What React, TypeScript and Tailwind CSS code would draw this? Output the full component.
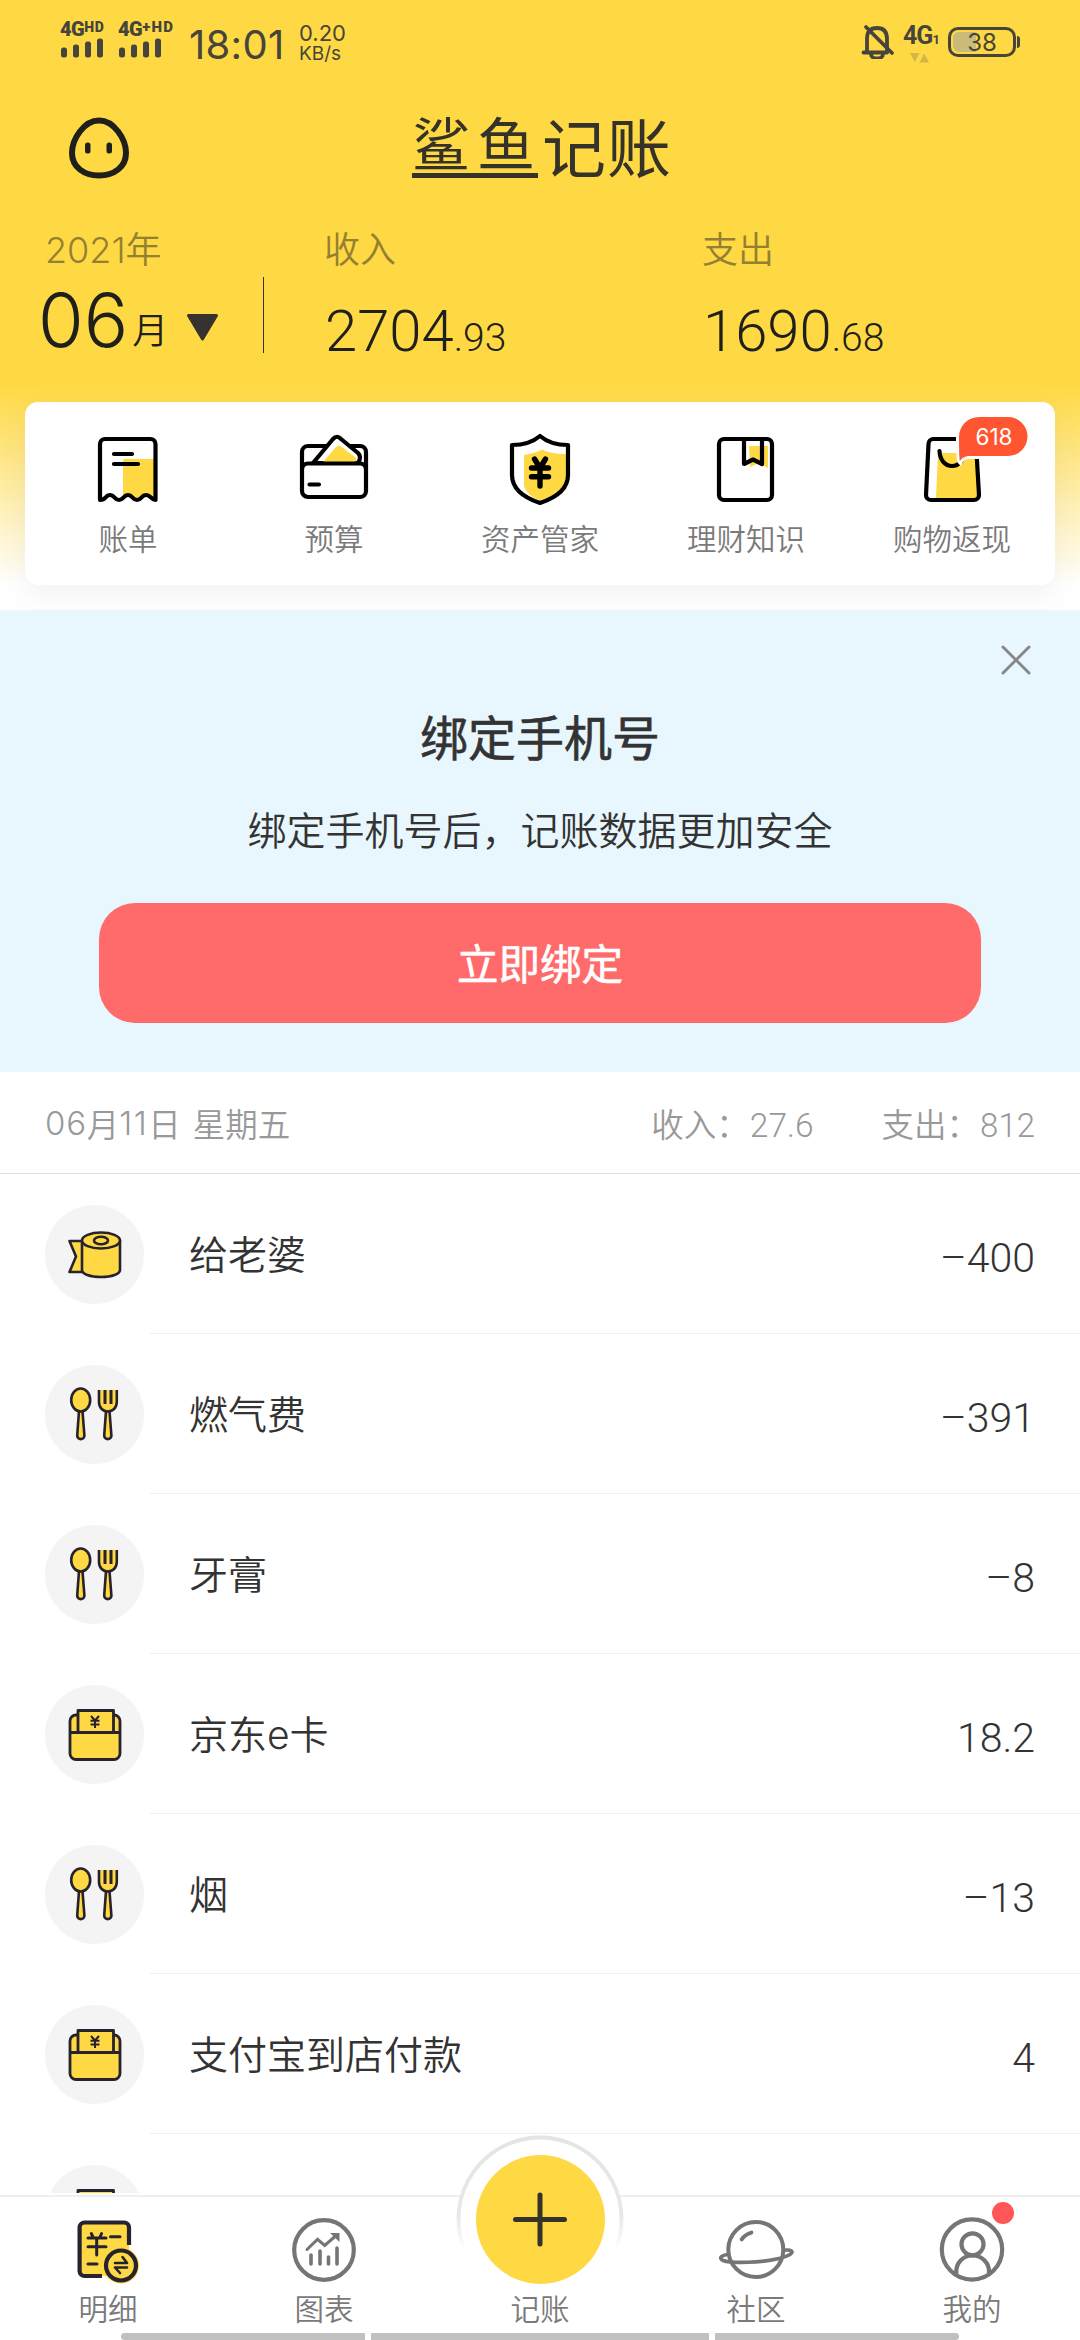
import type { ReactNode } from "react";

const YELLOW = "#FFD943";
const INK = "#26222E";

/* ---------- status bar ---------- */

function Signal({ children }: { children: ReactNode }) {
  return (
    <div className="flex flex-col">
      <div className="flex h-[18px] items-start whitespace-nowrap font-['Roboto'] text-[20px] font-black leading-[18px] tracking-[-0.5px]">
        {children}
      </div>
      <svg width="44" height="20" viewBox="0 0 44 20" fill="#47453B">
        <rect x="1" y="9.5" width="6" height="10" rx="2.5" />
        <rect x="13" y="6.5" width="6" height="13" rx="2.5" />
        <rect x="25" y="3.5" width="6" height="16" rx="2.5" />
        <rect x="37" y="0.5" width="6" height="19" rx="2.5" />
      </svg>
    </div>
  );
}

function StatusBar() {
  return (
    <div className="flex h-[80px] items-start pl-[60px] pr-[60px] font-['Inter'] text-[#47453B]">
      <div className="mt-[20px] w-[58px]">
        <Signal>
          4G<span className="text-[14px] leading-[14px] tracking-[0.8px]">HD</span>
        </Signal>
      </div>
      <div className="mt-[20px] w-[71px]">
        <Signal>
          4G<span className="text-[15px] leading-[14px] tracking-[1.200px]">+HD</span>
        </Signal>
      </div>
      <div className="mt-[24px] w-[110px] text-[40px] leading-[42px] tracking-[0.3px]">18:01</div>
      <div className="mt-[23px] text-[21px] leading-[21px]">
        <div className="text-[22px]">0.20</div>
        <div className="text-[19px] leading-[20px]">KB/s</div>
      </div>
      <div className="ml-auto flex">
        <svg className="mt-[23px]" width="34" height="36" viewBox="0 0 34 36" fill="none" stroke="#47453B" strokeWidth="3.8" strokeLinecap="round">
          <path d="M6 28V16C6 8 10 5 16 5s10 3 10 11v12" />
          <path d="M2.500 29.500H26" />
          <path d="M5 4L31 30" />
          <path d="M10 31a6 4.500 0 0 0 12 0" />
        </svg>
        <div className="ml-[8px] mt-[24px] w-[45px] font-['Roboto'] font-bold">
          <div className="text-[25px] leading-[24px] tracking-[-1px]">
            4G<span className="text-[13px]">1</span>
          </div>
          <svg className="ml-[7px] mt-[1px]" width="20" height="10" viewBox="0 0 20 10" fill="#D3B548">
            <path d="M0 0H9.500L4.750 9zM9.500 9.500H19L14.250 .5z" />
          </svg>
        </div>
        <div className="mt-[27px] flex h-[30px] items-center">
          <div className="relative h-[30px] w-[68px] rounded-[10px] border-[3px] border-[#47453B]">
            <div className="absolute left-[1.500px] top-[2px] h-[20px] w-[23px] rounded-l-[6px] bg-[#CBBB78]" />
            <div className="relative text-center text-[24px] leading-[25px]">38</div>
          </div>
          <div className="ml-px h-[12px] w-[3px] rounded-r-full bg-[#47453B]" />
        </div>
      </div>
    </div>
  );
}

/* ---------- header ---------- */

function FaceIcon() {
  return (
    <svg width="62" height="62" viewBox="0 0 62 62" fill="none">
      <path d="M31 3.500C46 3.500 58 22 58 36 58 50 46 58.500 31 58.500S4 50 4 36C4 22 16 3.500 31 3.500z" stroke="#1F1F1B" strokeWidth="6" />
      <rect x="17" y="25.500" width="5.500" height="11" rx="2.500" fill="#1F1F1B" />
      <rect x="38.500" y="25.500" width="5.500" height="11" rx="2.500" fill="#1F1F1B" />
    </svg>
  );
}

function Amount({ label, whole, cents, className }: { label: string; whole: string; cents: string; className: string }) {
  return (
    <div className={className}>
      <div className="mt-[-2px] h-[36px] text-[36px] font-[350] leading-[36px] text-[#948031]">{label}</div>
      <div className="ml-px mt-[37px] whitespace-nowrap font-['Roboto'] text-[58px] font-light leading-[58px] text-[#1F1F1B]">
        {whole}
        <span className="text-[39px]">{cents}</span>
      </div>
    </div>
  );
}

function Header() {
  return (
    <header>
      <div className="flex h-[151px] items-start">
        <div className="ml-[68px] mt-[37px]">
          <FaceIcon />
        </div>
        <h1 className="ml-[282px] mt-[34px] flex text-[64px] font-normal leading-[60px] tracking-[1px] text-[#35322A]">
          <span className="h-[64px] w-[126px] whitespace-nowrap border-b-[5px] border-[#35322A] text-[58px] leading-[55px] tracking-[7px]">鲨鱼</span>
          <span className="ml-[4px] leading-[61px]">记账</span>
        </h1>
      </div>
      <div className="flex h-[171px] items-start">
        <div className="ml-[45px] w-[218px]">
          <div className="mt-[-2px] h-[36px] text-[36px] font-[350] leading-[36px] text-[#948031]">
            <span className="font-['Inter'] font-light">2021</span>年
          </div>
          <div className="ml-[-7px] mt-[17px] flex items-end text-[#1F1F1B]">
            <span className="font-['Inter'] text-[74px] font-light leading-[76px]">06</span>
            <span className="mb-[12px] ml-[4px] text-[36px] font-[350] leading-[36px]">月</span>
            <svg className="mb-[16px] ml-[18px]" width="33" height="29" viewBox="0 0 33 29">
              <path d="M2.500 2.500H30.500L16.500 26z" fill="#35322F" stroke="#35322F" strokeWidth="3" strokeLinejoin="round" />
            </svg>
          </div>
        </div>
        <div className="mt-[46px] h-[76px] w-[1px] bg-[#35322A]" />
        <Amount className="ml-[60px] w-[378px]" label="收入" whole="2704" cents=".93" />
        <Amount className="" label="支出" whole="1690" cents=".68" />
      </div>
    </header>
  );
}

/* ---------- shortcuts ---------- */

function ShortcutSvg({ children }: { children: ReactNode }) {
  return (
    <svg width="72" height="74" viewBox="0 0 72 74" fill="none" stroke="#000" strokeWidth="4.200" strokeLinecap="round" strokeLinejoin="round">
      {children}
    </svg>
  );
}

function BillIcon() {
  return (
    <ShortcutSvg>
      <path d="M31 29a2 2 0 0 1 2-2h30v37l-9-1-9 4-14-4z" fill={YELLOW} stroke="none" />
      <path d="M8 68V12a5 5 0 0 1 5-5h45.500a5 5 0 0 1 5 5v56q-2 0-4.500-2.500T54 63t-4.500 2.500T45 68t-4.500-2.500T36 63t-4.500 2.500T27 68t-4.500-2.500T18 63t-4.500 2.500T8 68z" />
      <path d="M22 22H40M22 32H46" />
    </ShortcutSvg>
  );
}

function BudgetIcon() {
  return (
    <ShortcutSvg>
      <rect x="4" y="14" width="64" height="51" rx="6" />
      <path d="M15 31L35 7q4-4.500 8 0L60 21q4 4 0 10z" fill="#fff" />
      <path d="M24 31L38 15q3-3 6 0l14 11q1 3-2 5z" fill={YELLOW} stroke="none" />
      <path d="M4 37a6 6 0 0 1 6-5.500h52a6 6 0 0 1 6 5.500M11.500 52.500H21" />
    </ShortcutSvg>
  );
}

function AssetIcon() {
  return (
    <ShortcutSvg>
      <path d="M20 23C27 22 34 20 38 17.500 45 21 54 22 62 22V44C61 58 49 66 37 69 29 66 20 60 20 52z" fill={YELLOW} stroke="none" />
      <path d="M36 4C29 10 19 13 8 13V43C8 57 21 66 36 71 51 66 64 57 64 43V13C53 13 43 10 36 4z" />
      <path d="M30.500 27L36 36L41.500 27M27.500 36H44.500M27.500 44.700H44.500M36 36V54" strokeWidth="5.400" />
    </ShortcutSvg>
  );
}

function BookIcon() {
  return (
    <ShortcutSvg>
      <path d="M39 14H58V36L49 31L40 35z" fill={YELLOW} stroke="none" />
      <rect x="9" y="7" width="53" height="61" rx="5" />
      <path d="M34 7V32L43 27.500L52 32V7" />
    </ShortcutSvg>
  );
}

function BagIcon() {
  return (
    <ShortcutSvg>
      <path d="M22 21H60L62 66H20z" fill={YELLOW} stroke="none" />
      <path d="M17 7H55a5 5 0 0 1 5 5l3 51a5 5 0 0 1-5 5H15a5 5 0 0 1-5-5l2.500-51a5 5 0 0 1 4.500-5z" />
      <path d="M23.500 19C24 28 29 34 36 34S48 28 48.500 19" />
    </ShortcutSvg>
  );
}

function Badge({ text }: { text: string }) {
  return (
    <div className="absolute left-[43px] top-[-15px]">
      <svg width="75" height="54" viewBox="-3 -3 75 54" className="absolute left-[-3px] top-[-3px]">
        <path d="M20 0H49a19.500 19.500 0 0 1 0 39H9Q3 40 1 44Q0 43 0 20A20 20 0 0 1 20 0z" fill="#FF5530" stroke="#fff" strokeWidth="6" paintOrder="stroke" />
      </svg>
      <div className="relative h-[39px] w-[69px] pl-[1px] text-center font-['Inter'] text-[22.500px] leading-[40px] text-white">{text}</div>
    </div>
  );
}

const shortcuts = [
  { label: "账单", icon: <BillIcon /> },
  { label: "预算", icon: <BudgetIcon /> },
  { label: "资产管家", icon: <AssetIcon /> },
  { label: "理财知识", icon: <BookIcon /> },
  { label: "购物返现", icon: <BagIcon />, badge: "618" },
];

function Shortcuts() {
  return (
    <div className="mx-[25px] grid h-[183px] grid-cols-5 rounded-[13px] bg-white shadow-[0_10px_28px_rgba(90,90,120,0.08)]">
      {shortcuts.map((s) => (
        <div key={s.label} className="flex flex-col items-center pt-[30px]">
          <div className="relative h-[74px]">
            {s.icon}
            {s.badge && <Badge text={s.badge} />}
          </div>
          <div className="mt-[15px] text-[29.500px] font-[350] leading-[32px] text-[#7A7A7A]">{s.label}</div>
        </div>
      ))}
    </div>
  );
}

/* ---------- bind banner ---------- */

function BindBanner() {
  return (
    <section className="relative flex h-[462px] flex-col items-center bg-[#E8F7FD] text-[#333]">
      <svg className="absolute right-[49px] top-[35px]" width="30" height="30" viewBox="0 0 30 30" stroke="#888" strokeWidth="3" strokeLinecap="round">
        <path d="M2 2L28 28M28 2L2 28" />
      </svg>
      <h2 className="mt-[101px] text-[48px] font-normal leading-[48px] [-webkit-text-stroke:0.6px_#333]">绑定手机号</h2>
      <p className="mt-[50px] text-[39px] font-[350] leading-[39px]">绑定手机号后，记账数据更加安全</p>
      <button className="mt-[55px] h-[120px] w-[882px] rounded-[36px] bg-[#FF6B6B] pb-[2px] text-[41.500px] font-normal text-white [-webkit-text-stroke:0.6px_#fff]">立即绑定</button>
    </section>
  );
}

/* ---------- records ---------- */

function RollIcon() {
  return (
    <g fill={YELLOW} stroke={INK} strokeWidth="2.600" strokeLinejoin="round">
      <path d="M38 36H24.500L31 51.500L24.500 67H38z" />
      <path d="M37 35.500V65C37 69 45 72 56 72S75 69 75 65V35.500z" />
      <ellipse cx="56" cy="35.500" rx="19" ry="8" />
      <ellipse cx="56" cy="35.500" rx="7" ry="3.800" />
    </g>
  );
}

function CutleryIcon() {
  return (
    <g fill={YELLOW} stroke={INK} strokeWidth="2.600" strokeLinejoin="round">
      <path d="M34 46L32.200 70.500a3.600 3.600 0 0 0 7.200 0L37.500 46z" />
      <ellipse cx="35.700" cy="35" rx="9.500" ry="11.500" />
      <path d="M61 46L59.200 70.500a3.600 3.600 0 0 0 7.200 0L64.500 46z" />
      <path d="M54 25V37C54 43 58 46.500 62.800 46.500S71.800 43 71.800 37V25" />
      <path d="M60 25V39M66 25V39" strokeWidth="3" />
    </g>
  );
}

function WalletIcon() {
  return (
    <g fill={YELLOW} stroke={INK} strokeWidth="2.800" strokeLinejoin="round">
      <rect x="25" y="30" width="50" height="44.500" rx="6" />
      <path d="M33 47.500V25.500H68.500V47.500" />
      <path d="M25 47.500H75" />
      <path d="M46 31L50 35.500L54 31M45.500 35.800H54.500M45.500 39.500H54.500M50 35.500V43" strokeWidth="2" fill="none" />
    </g>
  );
}

const records = [
  { name: "给老婆", amount: "–400", icon: <RollIcon /> },
  { name: "燃气费", amount: "–391", icon: <CutleryIcon /> },
  { name: "牙膏", amount: "–8", icon: <CutleryIcon /> },
  { name: "京东e卡", amount: "18.2", icon: <WalletIcon /> },
  { name: "烟", amount: "–13", icon: <CutleryIcon /> },
  { name: "支付宝到店付款", amount: "4", icon: <WalletIcon /> },
  { name: "", amount: "", icon: <WalletIcon /> },
];

function Records() {
  return (
    <section className="min-h-0 flex-1 overflow-hidden bg-white">
      <div className="flex h-[102px] items-center border-b border-[#DCDCDC] px-[45px] pt-[6px] text-[32.500px] font-[350] text-[#999]">
        <div className="flex whitespace-nowrap pb-[4px]">
          <span className="font-['Inter'] text-[33px] font-light tracking-[0.8px]">06</span>月
          <span className="font-['Inter'] text-[33px] font-light tracking-[1.500px]">11</span>日
          <span className="ml-[12px]">星期五</span>
        </div>
        <div className="ml-auto flex gap-[68px] whitespace-nowrap">
          <div>
            收入：<span className="ml-[1px] font-['Roboto'] text-[33.500px] font-light">27.6</span>
          </div>
          <div>
            支出：<span className="ml-[1px] font-['Roboto'] text-[33px] font-light">812</span>
          </div>
        </div>
      </div>
      {records.map((r, i) => (
        <div key={i} className="flex h-[160px]">
          <div className="flex w-[150px] items-center pl-[45px]">
            <svg width="99" height="99" viewBox="0 0 99 99">
              <circle cx="49.500" cy="49.500" r="49.500" fill="#F4F4F4" />
              {r.icon}
            </svg>
          </div>
          <div className="flex flex-1 items-center justify-between border-b border-[#EFEFEF] pl-[39px] pr-[45px] text-[#333]">
            <span className="mt-[3px] font-['Inter','Noto_Sans_CJK_SC',sans-serif] text-[39px] font-[350] leading-[44px]">{r.name}</span>
            <span className="mt-[8px] font-['Roboto'] text-[41px] font-light leading-[44px]">{r.amount}</span>
          </div>
        </div>
      ))}
    </section>
  );
}

/* ---------- tab bar ---------- */

function DetailIcon() {
  return (
    <svg width="66" height="68" viewBox="0 0 66 68" fill="none" stroke={INK} strokeWidth="3" strokeLinecap="round" strokeLinejoin="round">
      <rect x="4.600" y="5.500" width="49.500" height="53.500" rx="5" fill={YELLOW} stroke="none" />
      <path d="M54 28V10.500a5 5 0 0 0-5-5H9.600a5 5 0 0 0-5 5V54a5 5 0 0 0 5 5H27" strokeWidth="4.200" strokeLinecap="butt" />
      <path d="M16.300 16.500L18 20M26.600 16.500L25 20M13 21H31M13 29.700H31M21.700 21V38M35.500 19.700H45M13 47H22" />
      <circle cx="46" cy="48.500" r="18" fill={YELLOW} stroke="none" />
      <circle cx="46" cy="48.500" r="15" fill={YELLOW} strokeWidth="4.200" />
      <path d="M40 46H52L47.500 40M52 50.500H40L45 56" strokeWidth="2.600" />
    </svg>
  );
}

function ChartIcon() {
  return (
    <svg width="64" height="68" viewBox="0 -1 64 68" fill="none" stroke="#757575" strokeWidth="3.600" strokeLinecap="round">
      <circle cx="32" cy="32" r="29.800" strokeWidth="4.200" />
      <path d="M15 31.500L25.500 21.300L32.700 27.500L43 18.500" strokeWidth="3" />
      <path d="M38 15H47.500V24z" fill="#757575" stroke="none" />
      <path d="M19 37V46M28 33V46M36.500 39V46M45 30V46" />
    </svg>
  );
}

function PlanetIcon() {
  return (
    <svg width="78" height="68" viewBox="0 0 78 68" fill="none" stroke="#757575" strokeWidth="4" strokeLinecap="round">
      <circle cx="38.800" cy="32.500" r="27.500" />
      <path d="M11 37.500C4 38.500 1.500 41 6 43.500 14 46.500 44 46 62 41.500 74 38.500 78 34.800 73 33.300 71 32.800 69 32.900 66.500 33.200" strokeWidth="3.600" />
      <path d="M24.700 22.300Q28 17.500 34.400 15.600" />
    </svg>
  );
}

function MineIcon() {
  return (
    <div className="relative">
      <svg width="66" height="68" viewBox="0 0 66 68" fill="none" stroke="#757575" strokeWidth="4.200" strokeLinecap="round">
        <circle cx="33" cy="32.500" r="30.200" />
        <circle cx="33.500" cy="27.300" r="11" />
        <path d="M17.300 56V54.500C17.300 46 24 38.500 33.500 38.500S50 46 50 54.500V56" />
      </svg>
      <div className="absolute left-[53px] top-[-15px] h-[22px] w-[22px] rounded-full bg-[#FF5658]" />
    </div>
  );
}

function AddButton() {
  return (
    <svg className="absolute left-1/2 top-[-60px] -translate-x-1/2" width="170" height="170" viewBox="0 0 170 170">
      <defs>
        <linearGradient id="ring" x1="0" y1="0" x2="0" y2="1">
          <stop offset="0" stopColor="#E4E4E4" />
          <stop offset="0.480" stopColor="#E8E8E8" />
          <stop offset="0.700" stopColor="#FFFFFF" />
        </linearGradient>
      </defs>
      <circle cx="85" cy="86" r="81.500" fill="#fff" stroke="url(#ring)" strokeWidth="3.800" />
      <circle cx="85.500" cy="86.500" r="64.500" fill={YELLOW} />
      <path d="M60.500 86.500H109.500M85 62V111" stroke="#35322A" strokeWidth="5" strokeLinecap="round" />
    </svg>
  );
}

const tabs = [
  { label: "明细", icon: <DetailIcon /> },
  { label: "图表", icon: <ChartIcon /> },
  { label: "记账", icon: null },
  { label: "社区", icon: <PlanetIcon /> },
  { label: "我的", icon: <MineIcon /> },
];

function TabBar() {
  return (
    <nav className="relative h-[147px] bg-white pt-[2px]">
      <div className="flex h-full flex-col border-t-2 border-[#EFEFEF]">
        <AddButton />
        <div className="relative grid grid-cols-5 pt-[20px]">
          {tabs.map((t) => (
            <div key={t.label} className="flex flex-col items-center">
              <div className="h-[68px]">{t.icon}</div>
              <div className="mt-[6px] text-[29.500px] font-[350] leading-[32px] text-[#7A7A7A]">{t.label}</div>
            </div>
          ))}
        </div>
        <div className="mt-auto flex h-[7px] justify-center gap-[6px]">
          <div className="w-[244px] rounded-l-full bg-[#C0C0C0]" />
          <div className="w-[338px] bg-[#C0C0C0]" />
          <div className="w-[244px] rounded-r-full bg-[#C0C0C0]" />
        </div>
      </div>
    </nav>
  );
}

export default function App() {
  return (
    <div className="flex h-[2340px] w-[1080px] flex-col overflow-hidden bg-white font-['Noto_Sans_CJK_SC',sans-serif]">
      <div className="h-[610px] shrink-0 bg-[linear-gradient(to_bottom,#FFD943_0px,#FFD943_385px,#FFFFFF_585px)]">
        <StatusBar />
        <Header />
        <Shortcuts />
      </div>
      <BindBanner />
      <Records />
      <TabBar />
    </div>
  );
}
